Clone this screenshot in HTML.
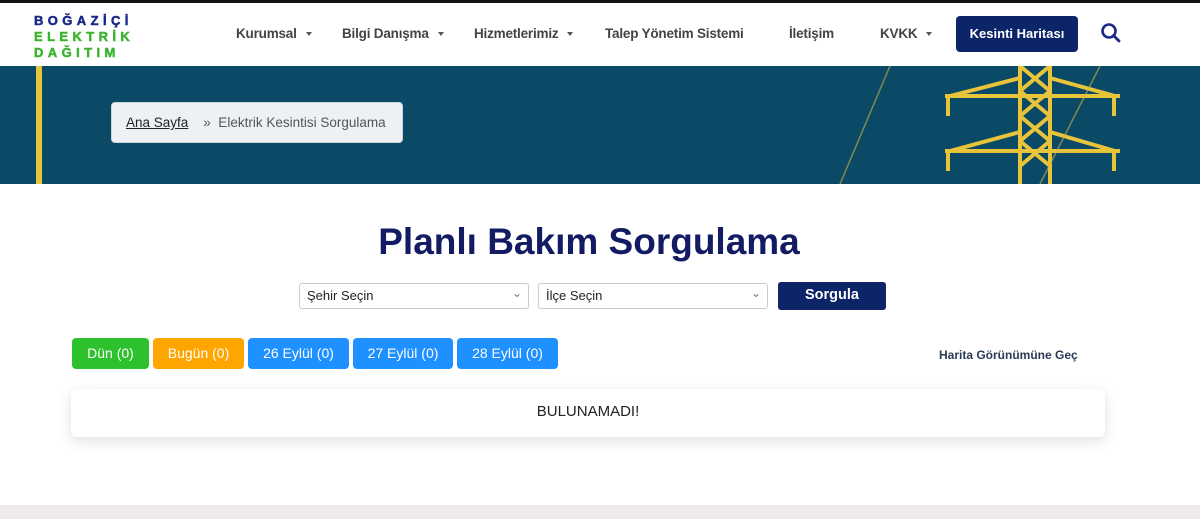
<!DOCTYPE html>
<html><head><meta charset="utf-8"><style>
*{margin:0;padding:0;box-sizing:border-box}
body{width:1200px;height:519px;overflow:hidden;background:#fff;font-family:"Liberation Sans",Arial,sans-serif;position:relative}
.abs{position:absolute}
.top{left:0;top:0;width:1200px;height:3px;background:#111}
.logo{left:34px;top:13px;font-weight:bold;font-size:13px;letter-spacing:4.4px;line-height:16px;-webkit-text-stroke:0.5px currentColor}
.nav{top:26px;font-size:13.5px;font-weight:bold;color:#444;letter-spacing:-0.2px}
.caret{display:inline-block;margin-left:9px;border-left:3px solid transparent;border-right:3px solid transparent;border-top:4px solid #555;vertical-align:middle}
.kh{left:956px;top:16px;width:122px;height:36px;background:#0c2468;border-radius:4px;color:#fff;font-weight:bold;font-size:13px;text-align:center;line-height:36px}
.banner{left:0;top:66px;width:1200px;height:118px;background:#0b4a66;overflow:hidden}
.bc{left:111px;top:102px;width:292px;height:41px;background:#eef1f3;border-radius:4px;border:1px solid #cbd3d8;font-size:13.5px;color:#555;line-height:40px;padding-left:14px}
h1{position:absolute;left:0;width:1178px;text-align:center;top:221px;font-size:37px;color:#131b63;font-weight:bold}
.sel{top:283px;width:230px;height:26px;border:1px solid #ccc;border-radius:3px;font-size:13px;color:#222;line-height:24px;padding-left:7px}
.sel:after{content:"⌄";position:absolute;right:6px;top:-3px;color:#777;font-size:12px}
.sg{left:778px;top:282px;width:108px;height:28px;background:#0c2468;border-radius:3px;color:#fff;font-weight:bold;font-size:14.5px;text-align:center;line-height:27px}
.b{top:338px;height:31px;border-radius:4px;color:#fff;font-size:14px;text-align:center;line-height:30px}
.card{left:71px;top:389px;width:1034px;height:48px;background:#fff;border-radius:6px;box-shadow:0 4px 14px rgba(0,0,0,.12);text-align:center;line-height:46px;font-size:15px;color:#222}
.foot{left:0;top:505px;width:1200px;height:14px;background:#f0ebeb}
</style></head><body>
<div class="abs top"></div>
<div class="abs logo"><div style="color:#1b2a8a">BOĞAZİÇİ</div><div style="color:#3bb52f">ELEKTRİK</div><div style="color:#3bb52f">DAĞITIM</div></div>
<div class="abs nav" style="left:236px">Kurumsal<span class="caret"></span></div>
<div class="abs nav" style="left:342px">Bilgi Danışma<span class="caret"></span></div>
<div class="abs nav" style="left:474px">Hizmetlerimiz<span class="caret"></span></div>
<div class="abs nav" style="left:605px">Talep Yönetim Sistemi</div>
<div class="abs nav" style="left:789px">İletişim</div>
<div class="abs nav" style="left:880px">KVKK<span class="caret"></span></div>
<div class="abs kh">Kesinti Haritası</div>
<svg class="abs" style="left:1100px;top:22px" width="22" height="22" viewBox="0 0 22 22"><circle cx="9" cy="9" r="6.5" fill="none" stroke="#1b2a8a" stroke-width="2.6"/><line x1="13.5" y1="13.5" x2="19" y2="19" stroke="#1b2a8a" stroke-width="2.8" stroke-linecap="round"/></svg>
<div class="abs banner">
<svg width="1200" height="118" viewBox="0 0 1200 118">
<rect x="36" y="0" width="6" height="118" fill="#e8c43a"/>
<g stroke="#e8c43a" stroke-width="4" fill="none">
<line x1="1020" y1="0" x2="1020" y2="118"/><line x1="1050" y1="0" x2="1050" y2="118"/>
<path d="M950 30 L1020 12 M1050 12 L1115 30 M945 30 H1120 M948 30 V50 M1114 30 V50"/>
<path d="M950 85 L1020 66 M1050 66 L1115 85 M945 85 H1120 M948 85 V105 M1114 85 V105"/>
<path d="M1020 0 L1050 25 M1050 0 L1020 25 M1020 25 L1050 50 M1050 25 L1020 50 M1020 50 L1050 75 M1050 50 L1020 75 M1020 75 L1050 100 M1050 75 L1020 100"/>
</g>
<g stroke="#c9b44a" stroke-width="1.5" opacity=".6"><line x1="890" y1="0" x2="840" y2="118"/><line x1="1100" y1="0" x2="1040" y2="118"/></g>
</svg></div>
<div class="abs bc"><span style="text-decoration:underline;color:#222">Ana Sayfa</span>&nbsp;&nbsp;&nbsp; »&nbsp; Elektrik Kesintisi Sorgulama</div>
<h1>Planlı Bakım Sorgulama</h1>
<div class="abs sel" style="left:299px">Şehir Seçin</div>
<div class="abs sel" style="left:538px">İlçe Seçin</div>
<div class="abs sg">Sorgula</div>
<div class="abs b" style="left:72px;width:77px;background:#2ec12e">Dün (0)</div>
<div class="abs b" style="left:153px;width:91px;background:#ffa500">Bugün (0)</div>
<div class="abs b" style="left:248px;width:101px;background:#1e90ff">26 Eylül (0)</div>
<div class="abs b" style="left:353px;width:100px;background:#1e90ff">27 Eylül (0)</div>
<div class="abs b" style="left:457px;width:101px;background:#1e90ff">28 Eylül (0)</div>
<div class="abs" style="left:939px;top:348px;font-size:12px;font-weight:bold;color:#2a3a55">Harita Görünümüne Geç</div>
<div class="abs card">BULUNAMADI!</div>
<div class="abs foot"></div>
</body></html>
